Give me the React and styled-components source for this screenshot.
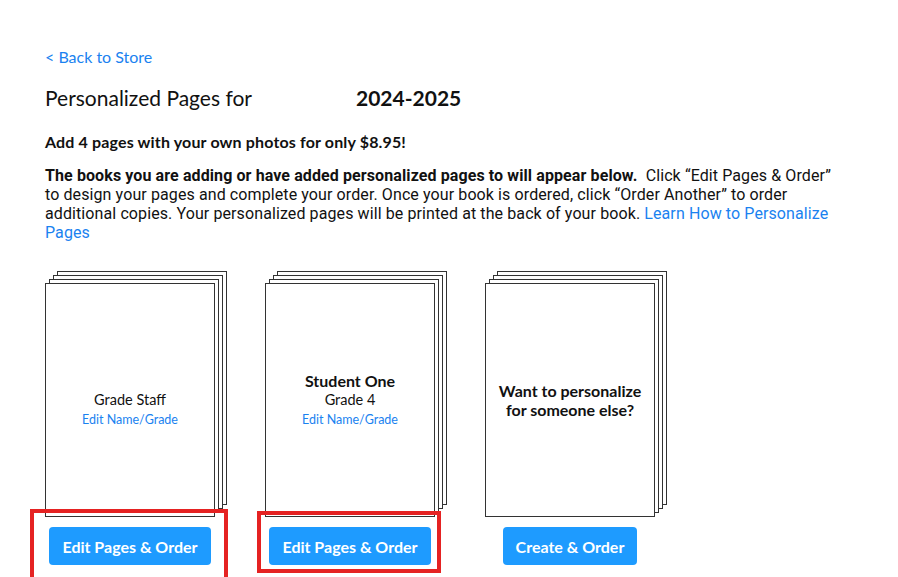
import React from 'react';
import styled, { createGlobalStyle } from 'styled-components';

const GlobalStyle = createGlobalStyle`
  html, body {
    margin: 0;
    padding: 0;
    background: #fff;
    overflow: hidden;
  }
  body {
    font-family: Lato, "Open Sans", Arial, sans-serif;
    color: #111;
  }
`;

const Page = styled.div`
  width: 898px;
  height: 577px;
  padding: 47px 0 0 45px;
  box-sizing: border-box;
`;

const BackLink = styled.a`
  display: block;
  font-size: 16px;
  line-height: 20px;
  color: #1a82f0;
  text-decoration: none;
`;

const Title = styled.h1`
  display: flex;
  margin: 18px 0 0;
  font-size: 21px;
  line-height: 26px;
  font-weight: 400;
  color: #111;
`;

const TitleLabel = styled.span`
  width: 311px;
`;

const Year = styled.span`
  font-weight: 700;
`;

const Offer = styled.p`
  margin: 21px 0 0;
  font-size: 16px;
  line-height: 20px;
  font-weight: 700;
  letter-spacing: 0.15px;
`;

const Info = styled.p`
  margin: 14px 0 0;
  width: 790px;
  font-family: Roboto, Arial, sans-serif;
  font-size: 16px;
  line-height: 19px;
  letter-spacing: 0.1px;

  b {
    font-weight: 700;
  }

  a {
    color: #1a82f0;
    text-decoration: none;
  }
`;

const Cards = styled.div`
  display: flex;
  gap: 38px;
  margin-top: 29px;
`;

const Card = styled.div`
  display: flex;
  flex-direction: column;
  width: 182px;
  padding-top: 12px;
`;

const Sheet = styled.div`
  width: 170px;
  height: 234px;
  box-sizing: border-box;
  border: 1px solid #333;
  background: #fff;
  box-shadow:
    4px -4px 0 -1px #fff, 4px -4px 0 0 #333,
    8px -8px 0 -1px #fff, 8px -8px 0 0 #333,
    12px -12px 0 -1px #fff, 12px -12px 0 0 #333;
  display: flex;
  flex-direction: column;
  justify-content: center;
  align-items: center;
  text-align: center;
`;

const Name = styled.div`
  font-size: 16px;
  line-height: 19px;
  font-weight: 700;
  min-height: 19px;
`;

const Grade = styled.div`
  font-size: 14.5px;
  line-height: 19px;
`;

const EditLink = styled.a`
  margin-top: 2px;
  font-size: 12.5px;
  line-height: 18px;
  color: #1a82f0;
  text-decoration: none;
`;

const Prompt = styled.div`
  font-size: 16px;
  line-height: 19px;
  font-weight: 700;
  padding: 0 8px;
`;

const ButtonSlot = styled.div`
  position: relative;
  width: 170px;
  display: flex;
  justify-content: center;
  margin-top: 10px;
`;

const Button = styled.button`
  height: 38px;
  width: ${p => p.$width}px;
  border: 0;
  border-radius: 4px;
  background: #1e9bff;
  color: #fff;
  font-family: Lato, Arial, sans-serif;
  font-size: 16px;
  font-weight: 700;
  cursor: pointer;
`;

const Highlight = styled.div`
  position: absolute;
  top: ${p => p.$top}px;
  left: ${p => p.$left}px;
  right: ${p => p.$right}px;
  bottom: ${p => p.$bottom}px;
  border: 4px solid #e52222;
  pointer-events: none;
`;

const books = [
  { name: '', grade: 'Grade Staff', box: { top: -18, left: -15, right: -13, bottom: -16 } },
  { name: 'Student One', grade: 'Grade 4', box: { top: -16, left: -8, right: -6, bottom: -8 } },
];

export default function App() {
  return (
    <Page>
      <GlobalStyle />
      <BackLink href="#">&lt; Back to Store</BackLink>
      <Title>
        <TitleLabel>Personalized Pages for</TitleLabel>
        <Year>2024-2025</Year>
      </Title>
      <Offer>Add 4 pages with your own photos for only $8.95!</Offer>
      <Info>
        <b>The books you are adding or have added personalized pages to will appear below.</b>
        &nbsp; Click “Edit Pages &amp; Order” to design your pages and complete your order. Once your
        book is ordered, click “Order Another” to order additional copies. Your personalized pages
        will be printed at the back of your book. <a href="#">Learn How to Personalize Pages</a>
      </Info>
      <Cards>
        {books.map(b => (
          <Card key={b.grade}>
            <Sheet>
              <Name>{b.name}</Name>
              <Grade>{b.grade}</Grade>
              <EditLink href="#">Edit Name/Grade</EditLink>
            </Sheet>
            <ButtonSlot>
              <Button $width={162}>Edit Pages &amp; Order</Button>
              <Highlight $top={b.box.top} $left={b.box.left} $right={b.box.right} $bottom={b.box.bottom} />
            </ButtonSlot>
          </Card>
        ))}
        <Card>
          <Sheet>
            <Prompt>Want to personalize for someone else?</Prompt>
          </Sheet>
          <ButtonSlot>
            <Button $width={134}>Create &amp; Order</Button>
          </ButtonSlot>
        </Card>
      </Cards>
    </Page>
  );
}
